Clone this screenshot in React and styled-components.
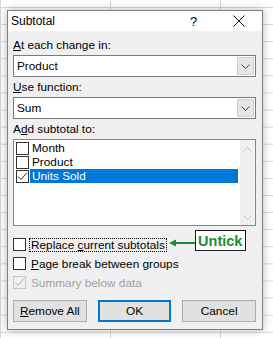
import React from "react"
import styled, { createGlobalStyle } from "styled-components"

const GlobalStyle = createGlobalStyle`
  html, body, #root {
    margin: 0;
    height: 100%;
  }
  body {
    font-family: "Liberation Sans", Arial, sans-serif;
    background-color: #fff;
    background-image:
      linear-gradient(#d6d6d6 1px, transparent 1px),
      linear-gradient(90deg, #d6d6d6 1px, transparent 1px);
    background-size: 100% 17.1px, 110px 100%;
    background-position: 0 7px, 110px 0;
    overflow: hidden;
  }
`

const Dialog = styled.div`
  box-sizing: border-box;
  margin: 10px 0 0 7px;
  width: 256px;
  height: 320px;
  border: 1px solid #7f7f7f;
  background: #f0f0f0;
  box-shadow: 0 0 9px rgba(0, 0, 0, 0.28);
  display: flex;
  flex-direction: column;
  font-size: 11.8px;
  color: #000;
`

const TitleBar = styled.div`
  height: 20px;
  background: #fff;
  display: flex;
  align-items: center;
  padding-left: 3px;
  font-size: 12px;
`

const Title = styled.div`
  flex: 1;
`

const Help = styled.span`
  width: 12px;
  margin-right: 31px;
  font-size: 13px;
`

const CloseBox = styled.div`
  width: 12px;
  height: 12px;
  margin-right: 17px;
  display: flex;
`

const Body = styled.div`
  padding: 7px 6px 0 5px;
  display: flex;
  flex-direction: column;
`

const Label = styled.div`
  height: 17px;
  line-height: 15px;
`

const Key = styled.span`
  text-decoration: underline;
  text-underline-offset: 1px;
`

const Select = styled.div`
  box-sizing: border-box;
  height: 22px;
  border: 1px solid #7a7a7a;
  background: #fff;
  display: flex;
  align-items: stretch;
  margin-bottom: 3px;
`

const SelectValue = styled.div`
  flex: 1;
  padding-left: 3px;
  display: flex;
  align-items: center;
`

const DropButton = styled.div`
  box-sizing: border-box;
  width: 17px;
  margin: 1px;
  background: #e6e6e6;
  border: 1px solid #cfcfcf;
  display: flex;
  align-items: center;
  justify-content: center;
`

const ListBox = styled.div`
  box-sizing: border-box;
  height: 87px;
  border: 1px solid #828790;
  background: #fff;
  display: flex;
`

const Items = styled.div`
  flex: 1;
  padding: 1px 2px 0 2px;
`

const Item = styled.div`
  height: 14px;
  display: flex;
  align-items: center;
`

const ItemText = styled.div`
  flex: 1;
  height: 14px;
  line-height: 14px;
  margin-left: 1px;
  padding-left: 2px;
  background: ${p => (p.$selected ? "#0078d7" : "transparent")};
  color: ${p => (p.$selected ? "#fff" : "#000")};
`

const ScrollBar = styled.div`
  width: 15px;
  background: #f0f0f0;
  display: flex;
  flex-direction: column;
  justify-content: space-between;
  align-items: center;
  padding: 7px 0 5px;
`

const Box = styled.div`
  box-sizing: border-box;
  width: 13px;
  height: 13px;
  flex: none;
  border: 1px solid ${p => (p.$disabled ? "#c6c6c6" : "#333")};
  background: ${p => (p.$disabled ? "#f0f0f0" : "#fff")};
  display: flex;
  align-items: center;
  justify-content: center;
`

const OptionRow = styled.div`
  height: 13px;
  display: flex;
  align-items: center;
  margin-top: ${p => p.$gap}px;
`

const OptionText = styled.span`
  margin-left: 3px;
  padding: 0 1px;
  line-height: 12px;
  border: 1px dotted ${p => (p.$focus ? "#000" : "transparent")};
  color: ${p => (p.$disabled ? "#a0a0a0" : "#000")};
`

const Arrow = styled.svg`
  margin-left: 2px;
  margin-bottom: 4px;
  flex: none;
`

const Callout = styled.div`
  box-sizing: border-box;
  width: 51px;
  height: 21px;
  align-self: flex-end;
  border: 1px solid #1a1a1a;
  background: #fff;
  color: #1e8c37;
  font-weight: bold;
  font-size: 14.5px;
  display: flex;
  align-items: center;
  justify-content: center;
`

const Buttons = styled.div`
  display: flex;
  gap: 11px;
  margin-top: 11px;
`

const Button = styled.div`
  box-sizing: border-box;
  width: 74px;
  height: 22px;
  background: #e1e1e1;
  border: ${p => (p.$default ? "2px solid #0078d7" : "1px solid #adadad")};
  display: flex;
  align-items: center;
  justify-content: center;
`

const Chevron = ({ up, color = "#444" }) => (
  <svg width="9" height="5" viewBox="0 0 9 5">
    <path
      d={up ? "M0.5 4.5 L4.5 0.5 L8.5 4.5" : "M0.5 0.5 L4.5 4.5 L8.5 0.5"}
      fill="none"
      stroke={color}
      strokeWidth="1"
    />
  </svg>
)

const Check = ({ color = "#333" }) => (
  <svg width="11" height="11" viewBox="0 0 11 11">
    <path d="M1 5.5 L4 8.5 L10 1.5" fill="none" stroke={color} strokeWidth="1" />
  </svg>
)

const App = () => {
  return (
    <>
      <GlobalStyle />
      <Dialog>
        <TitleBar>
          <Title>Subtotal</Title>
          <Help>?</Help>
          <CloseBox>
            <svg width="12" height="12" viewBox="0 0 12 12">
              <path d="M0.5 0.5 L11.5 11.5 M11.5 0.5 L0.5 11.5" stroke="#111" strokeWidth="1" />
            </svg>
          </CloseBox>
        </TitleBar>
        <Body>
          <Label><Key>A</Key>t each change in:</Label>
          <Select>
            <SelectValue>Product</SelectValue>
            <DropButton><Chevron /></DropButton>
          </Select>
          <Label><Key>U</Key>se function:</Label>
          <Select>
            <SelectValue>Sum</SelectValue>
            <DropButton><Chevron /></DropButton>
          </Select>
          <Label>A<Key>d</Key>d subtotal to:</Label>
          <ListBox>
            <Items>
              <Item><Box /><ItemText>Month</ItemText></Item>
              <Item><Box /><ItemText>Product</ItemText></Item>
              <Item><Box><Check /></Box><ItemText $selected>Units Sold</ItemText></Item>
            </Items>
            <ScrollBar>
              <Chevron up color="#c2c2c2" />
              <Chevron color="#c2c2c2" />
            </ScrollBar>
          </ListBox>
          <OptionRow $gap={12}>
            <Box />
            <OptionText $focus>Replace <Key>c</Key>urrent subtotals</OptionText>
            <Arrow width="26" height="8" viewBox="0 0 26 8">
              <path d="M0 4 L7 0.5 L7 7.5 Z" fill="#1e8c37" />
              <path d="M6 4 H26" stroke="#1e8c37" strokeWidth="2" />
            </Arrow>
            <Callout>Untick</Callout>
          </OptionRow>
          <OptionRow $gap={6}>
            <Box />
            <OptionText><Key>P</Key>age break between groups</OptionText>
          </OptionRow>
          <OptionRow $gap={6}>
            <Box $disabled><Check color="#b8b8b8" /></Box>
            <OptionText $disabled>Summary below data</OptionText>
          </OptionRow>
          <Buttons>
            <Button><span><Key>R</Key>emove All</span></Button>
            <Button $default>OK</Button>
            <Button>Cancel</Button>
          </Buttons>
        </Body>
      </Dialog>
    </>
  )
}

export default App
